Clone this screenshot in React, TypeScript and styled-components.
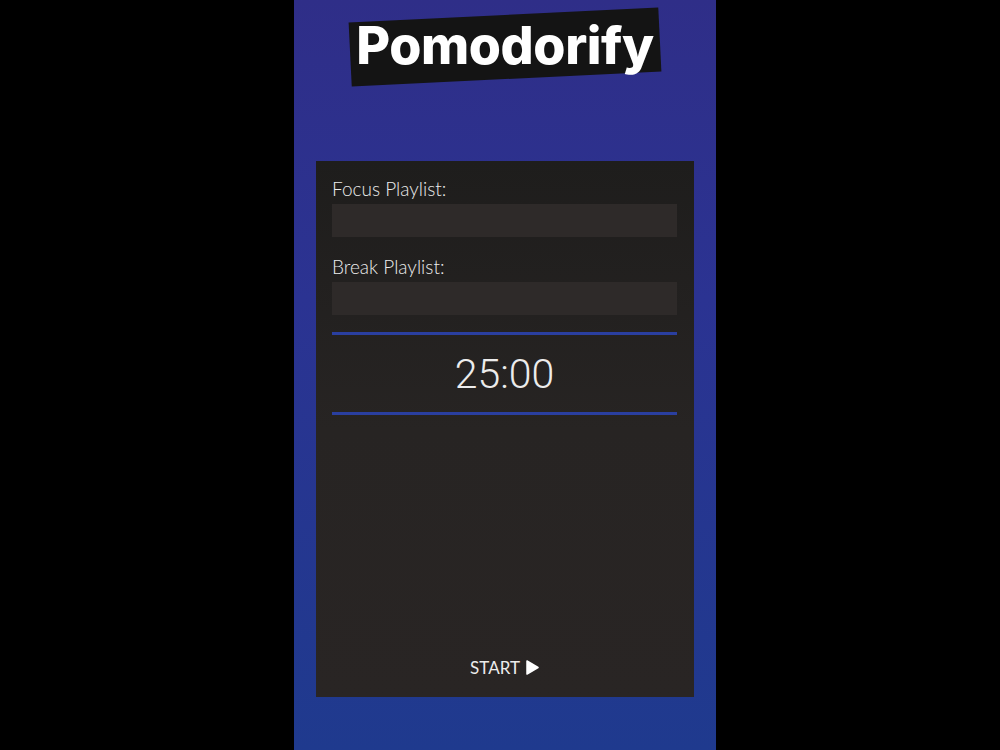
import * as React from 'react';
import styled, { createGlobalStyle } from 'styled-components';

const GlobalStyle = createGlobalStyle`
  html, body {
    margin: 0;
    padding: 0;
    background: #000;
  }
  body {
    font-family: 'Lato', 'Noto Sans', sans-serif;
  }
`;

const Page = styled.div`
  width: 1000px;
  height: 750px;
  display: flex;
  justify-content: center;
  background: #000;
  padding-left: 10px;
  box-sizing: border-box;
`;

const Column = styled.main`
  width: 422px;
  height: 750px;
  background: linear-gradient(180deg, #2f2e88 0%, #2b3392 40%, #1f3a8e 100%);
  display: flex;
  flex-direction: column;
  align-items: center;
  box-sizing: border-box;
  padding-top: 14px;
`;

const Title = styled.h1`
  position: relative;
  margin: 0;
  padding: 0 6px;
  font-family: 'Inter', 'Noto Sans', sans-serif;
  font-weight: 800;
  font-size: 52px;
  line-height: 64px;
  letter-spacing: -0.4px;
  color: #fff;
  z-index: 0;

  &::before {
    content: '';
    position: absolute;
    left: 0;
    right: 0;
    top: 1px;
    bottom: -1px;
    background: #141414;
    transform: rotate(-2.8deg);
    z-index: -1;
  }
`;

const Card = styled.section`
  margin-top: 83px;
  width: 378px;
  height: 536px;
  background: linear-gradient(180deg, #1e1d1c 0%, #272423 50%, #292524 100%);
  box-sizing: border-box;
  padding: 17px 17px 19px 16px;
  display: flex;
  flex-direction: column;
`;

const Label = styled.label`
  display: block;
  color: #ececec;
  font-family: 'Lato', sans-serif;
  font-weight: 300;
  font-size: 19px;
  line-height: 22px;
  margin-bottom: 4px;
`;

const PlaylistInput = styled.input<{ $last?: boolean }>`
  display: block;
  width: 100%;
  height: 33px;
  border: none;
  outline: none;
  background: #2e2a29;
  color: #eee;
  box-sizing: border-box;
  padding: 0 10px;
  margin-bottom: ${(p) => (p.$last ? '17px' : '19px')};
`;

const Divider = styled.hr`
  border: none;
  height: 3px;
  margin: 0;
  background: #2a3fa0;
`;

const Timer = styled.div`
  height: 77px;
  display: flex;
  align-items: center;
  justify-content: center;
  font-family: 'Roboto', sans-serif;
  font-weight: 300;
  font-size: 41px;
  color: #ececec;
`;

const Spacer = styled.div`
  flex: 1;
`;

const StartButton = styled.button`
  align-self: center;
  display: flex;
  align-items: center;
  gap: 6px;
  border: none;
  background: none;
  color: #ececec;
  font-family: 'Lato', sans-serif;
  font-size: 17px;
  font-weight: 400;
  cursor: pointer;
  padding: 0;
`;

export default function App() {
  return (
    <>
      <GlobalStyle />
      <Page>
        <Column>
          <Title>Pomodorify</Title>
          <Card>
            <Label htmlFor="focus">Focus Playlist:</Label>
            <PlaylistInput id="focus" type="text" />
            <Label htmlFor="break">Break Playlist:</Label>
            <PlaylistInput id="break" type="text" $last />
            <Divider />
            <Timer>25:00</Timer>
            <Divider />
            <Spacer />
            <StartButton>
              START
              <svg width="13" height="15" viewBox="0 0 13 15">
                <path d="M1 1 L12 7.5 L1 14 Z" fill="#fff" stroke="#fff" strokeWidth="1.5" strokeLinejoin="round" />
              </svg>
            </StartButton>
          </Card>
        </Column>
      </Page>
    </>
  );
}
